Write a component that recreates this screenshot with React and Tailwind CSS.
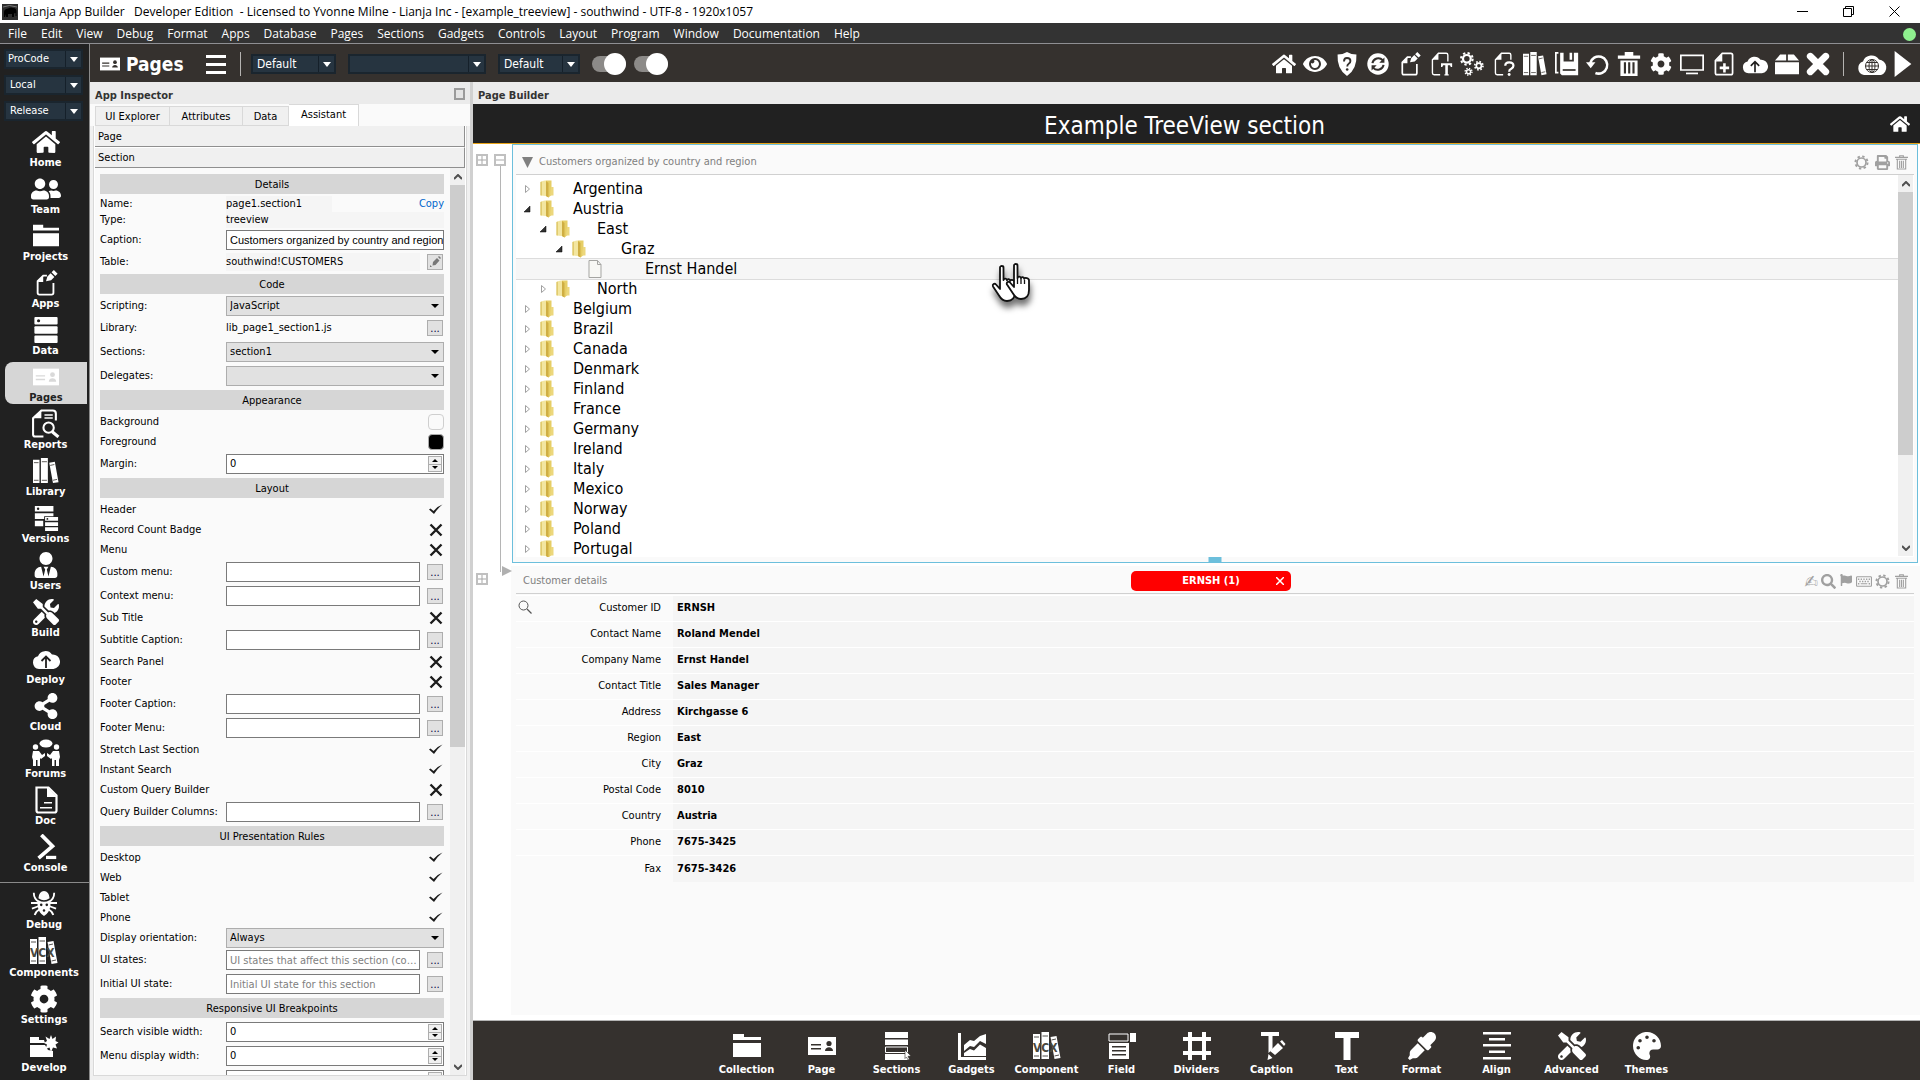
import { useState } from 'react'
import {
  FaHome, FaEye, FaCog, FaShareAlt, FaSearch, FaFlag, FaPalette,
  FaEyeDropper, FaUserTie, FaUserFriends, FaTools, FaPrint, FaRegKeyboard,
} from 'react-icons/fa'

const ui = "font-['DejaVu_Sans_Condensed','DejaVu_Sans',sans-serif]"
const segoe = "font-['Open_Sans','Noto_Sans',sans-serif]"
const narrow = "font-['Liberation_Sans','Arial',sans-serif]"

/* ---------- icons ---------- */

const Svg = ({ children, className = 'h-7 w-7', box = '0 0 28 28' }) => (
  <svg viewBox={box} className={className} fill="currentColor" aria-hidden="true">{children}</svg>
)

const FolderIcon = (p) => (
  <Svg {...p}><path d="M0 2h11v3h17v3H0zM0 11h28v14H0z" /></Svg>
)
const BoxIcon = (p) => (
  <Svg {...p}><path d="M6 3h7v7H0zM15 3h7l6 7H15zM0 12h28v14H0z" /></Svg>
)
const CardIcon = ({ hole = '#211f1e', ...p }) => (
  <Svg {...p}>
    <path d="M0 5h28v18H0z" />
    <g fill={hole}>
      <path d="M3 12h10v1.500H3zM3 16h10v1.500H3zM17 19c0-5 8-5 8 0z" />
      <circle cx="21" cy="11.500" r="2.600" />
    </g>
  </Svg>
)
const DocEditIcon = (p) => (
  <Svg {...p}>
    <path d="M15 6h-4L5 12v12.500q0 2 2 2h13q2 0 2-2V14" fill="none" stroke="currentColor" strokeWidth="2" />
    <path d="M11 6v7H5zM14 12l1.500-5L19 3.500l4 4L19.500 11zM20 2.500L22.500 0l4 4L24 6.500z" />
  </Svg>
)
const DocTextIcon = (p) => (
  <Svg {...p}>
    <path d="M13 26.500H6q-2 0-2-2V9l7-7.500h9q2 0 2 2V11" fill="none" stroke="currentColor" strokeWidth="1.600" />
    <path d="M11 2v7H4zM14 13h13v4.500h-1.500l-1-2H22V26h1v1.500h-5V26h1V15.500h-2.500l-1 2H14z" />
  </Svg>
)
const DocHelpIcon = (p) => (
  <Svg {...p}>
    <path d="M13 26.500H6q-2 0-2-2V9l7-7.500h9q2 0 2 2V9" fill="none" stroke="currentColor" strokeWidth="1.600" />
    <path d="M11 2v7H4z" />
    <path d="M15.500 16q0-4 4.500-4 5 0 5 4 0 2-2.500 3.500Q20 20.500 20 23" fill="none" stroke="currentColor" strokeWidth="2.600" />
    <circle cx="20" cy="26.300" r="1.700" />
  </Svg>
)
const DocPlusIcon = (p) => (
  <Svg {...p}>
    <path d="M12 1.500h10q2 0 2 2v21q0 2-2 2H6q-2 0-2-2V10z" fill="none" stroke="currentColor" strokeWidth="2" />
    <path d="M12 2v9H4zM13 13h3v4h4v3h-4v4h-3v-4H9v-3h4z" />
  </Svg>
)
const DocIcon = (p) => (
  <Svg {...p}>
    <path d="M4.500 1.500h12l8 8v15q0 2-2 2h-16q-2 0-2-2z" fill="none" stroke="currentColor" strokeWidth="2.200" />
    <path d="M15 1v10h10zM12 16h8v1.600h-8zM8 21h12v1.600H8z" />
  </Svg>
)
const ReportIcon = (p) => (
  <Svg {...p}>
    <path d="M12 26.500H4q-2 0-2-2V9l8-7.500h11q3 0 3 3V11" fill="none" stroke="currentColor" strokeWidth="2" />
    <path d="M10 1v8H2zM13 5h8v1.500h-8zM13 8h8v1.500h-8z" />
    <circle cx="17" cy="18" r="5" fill="none" stroke="currentColor" strokeWidth="2" />
    <path d="M20.500 22l6 5" stroke="currentColor" strokeWidth="3" />
  </Svg>
)
const ServerIcon = (p) => (
  <Svg {...p}>
    <rect x="1.500" y="0" width="25" height="8" rx="1" />
    <rect x="1.500" y="10" width="25" height="8" rx="1" />
    <rect x="1.500" y="20" width="25" height="8" rx="1" />
    <circle cx="6" cy="4" r="1.700" fill="#211f1e" />
  </Svg>
)
const VersionsIcon = (p) => (
  <Svg {...p}>
    <path d="M2 1h20v6H2zM2 9h20v3H12v3H2zM2 17h9v6H2zM13 13h14v4H13zM13 18.500h14v4H13zM13 24h14v4H13z" />
    <circle cx="5.500" cy="4" r="1.300" fill="#211f1e" />
    <circle cx="15.500" cy="15" r="1" fill="#211f1e" />
  </Svg>
)
const BooksIcon = ({ text, ...p }) => (
  <Svg {...p}>
    <path d="M0 2h7v25H0zM8.500 0h7.500v27H8.500zM17.500 5l6-1 4 22-6 1z" />
    <path d="M1 5h5M1 24h5M9.500 4h5.500M9.500 24h5.500M18.500 8l4.500-1M21.500 24l4.500-1" stroke="#55524f" strokeWidth="1" />
    {text && (
      <text x="0" y="20" fill="#4a4940" fontSize="12" fontWeight="bold" fontFamily="DejaVu Sans Condensed">{text}</text>
    )}
  </Svg>
)
const CloudUpIcon = (p) => (
  <Svg {...p}>
    <path d="M7 24a6.500 6.500 0 0 1-1-12.800A8 8 0 0 1 20 9.500 7.200 7.200 0 0 1 21.500 24z" />
    <path d="M14 23v-11M9.500 16l4.500-4.500 4.500 4.500" fill="none" stroke="#211f1e" strokeWidth="1.800" />
  </Svg>
)
const CloudGlobeIcon = (p) => (
  <Svg {...p} box="0 0 32 28">
    <path d="M8 25a7 7 0 0 1-1-13.500A9 9 0 0 1 23 9.500 8 8 0 0 1 25 25z" />
    <g fill="none" stroke="#34302d" strokeWidth="1">
      <circle cx="16" cy="16" r="6.500" />
      <ellipse cx="16" cy="16" rx="3" ry="6.500" />
      <path d="M9.500 16h13M16 9.500v13M10.500 12.500h11M10.500 19.500h11" />
    </g>
  </Svg>
)
const GearsIcon = (p) => (
  <Svg {...p}>
    <g fill="none" stroke="currentColor">
      <circle cx="8" cy="8" r="4.500" strokeWidth="2.600" />
      <circle cx="8" cy="8" r="6.800" strokeWidth="2.400" strokeDasharray="2.670 2.670" />
      <circle cx="22" cy="16" r="3" strokeWidth="2" />
      <circle cx="22" cy="16" r="4.800" strokeWidth="2" strokeDasharray="1.885 1.885" />
      <circle cx="10" cy="23" r="2.400" strokeWidth="1.800" />
      <circle cx="10" cy="23" r="4" strokeWidth="1.600" strokeDasharray="1.570 1.570" />
    </g>
  </Svg>
)
const ForumsIcon = (p) => (
  <Svg {...p}>
    <ellipse cx="14" cy="4.500" rx="6.500" ry="4" />
    <circle cx="3.500" cy="8" r="2.700" /><circle cx="24.500" cy="8" r="2.700" />
    <path d="M1 12h6l3 4 3-2v3l-4 3-1-1v8H5.500v-6H4v6H1V21l-1-3zM27 12h-6l-3 4-3-2v3l4 3 1-1v8h2.500v-6H24v6h3V21l1-3z" />
  </Svg>
)
const ConsoleIcon = (p) => (
  <Svg {...p}>
    <path d="M9 1l12 12-15 13" fill="none" stroke="currentColor" strokeWidth="4" />
    <path d="M14 23.500h11V27H14z" />
  </Svg>
)
const BugIcon = (p) => (
  <Svg {...p}>
    <path d="M8 9a6 8 0 0 1 12 0q-6 4-12 0zM8 11q6 3.500 12 0l1 5q-1 9-7 12-6-3-7-12z" />
    <path d="M3 3q0 7 6 10M25 3q0 7-6 10M0 14h8M20 14h8M1 20l7-2.500M27 20l-7-2.500M4 27q1-4 5-6M24 27q-1-4-5-6" fill="none" stroke="currentColor" strokeWidth="2" />
    <g fill="#211f1e"><circle cx="11" cy="16" r="1.400" /><circle cx="17" cy="16" r="1.400" /><circle cx="14" cy="22" r="1.300" /></g>
  </Svg>
)
const DevelopIcon = (p) => (
  <Svg {...p}>
    <path d="M0 4h9v3h5l1 3H0zM0 12h15l3 5 5 1v6H0z" />
    <path d="M21 2l1.500 4L26 3.500 25.500 8l3 1.500-3 2 1.500 4-4-1L21 19l-1.500-4.500-4 1.500 1.500-4.500-3-1.500 3-2-1.500-4.500 4 2.500z" />
  </Svg>
)
const ShieldIcon = (p) => (
  <Svg {...p}>
    <path d="M14 0q5 3 11 3 1 17-11 25Q2 20 3 3q6 0 11-3z" />
    <path d="M10.500 11q0-4 3.500-4 4 0 4 3.500 0 2-2 3.200-1.700 1-1.700 3.300" fill="none" stroke="#34302d" strokeWidth="2.200" />
    <circle cx="14.200" cy="20.500" r="1.500" fill="#34302d" />
  </Svg>
)
const SyncIcon = (p) => (
  <Svg {...p}>
    <circle cx="14" cy="14" r="12.500" />
    <g fill="none" stroke="#34302d" strokeWidth="2.400">
      <path d="M7.500 13a7 7 0 0 1 12-3.500M20.500 15a7 7 0 0 1-12 3.500" />
    </g>
    <path d="M21.500 6.500v6h-6zM6.500 21.500v-6h6z" fill="#34302d" />
  </Svg>
)
const SaveIcon = (p) => (
  <Svg {...p}>
    <path d="M4 1H1v23h3" fill="none" stroke="currentColor" strokeWidth="2" />
    <path d="M6 1h4v10h12V1h5v26H8l-2-2zM17 1h3v8h-3z" />
    <path d="M9 20h15v2H9z" fill="#34302d" />
  </Svg>
)
const UndoIcon = (p) => (
  <Svg {...p}>
    <path d="M5 13a10 10 0 1 1 6 11.500" fill="none" stroke="currentColor" strokeWidth="3" />
    <path d="M0 12h11l-5.500 7z" />
  </Svg>
)
const TrashIcon = (p) => (
  <Svg {...p}>
    <path d="M9 0h10v4h8v4H1V4h8z" />
    <path fillRule="evenodd" d="M4 10h20v18H4zM8 12v13h2.500V12zM13 12v13h2.500V12zM18 12v13h2.500V12z" />
  </Svg>
)
const TrashOutline = (p) => (
  <Svg {...p} box="0 0 14 16">
    <path d="M5 2V.700h4V2M0 2.500h14M1 4.500h12M2.500 5v10h9V5M5 6v8M7 6v8M9 6v8" fill="none" stroke="currentColor" strokeWidth="1.200" />
  </Svg>
)
const GearOutline = (p) => (
  <Svg {...p} box="0 0 16 16">
    <circle cx="8" cy="8" r="4.800" fill="none" stroke="currentColor" strokeWidth="1.800" />
    <circle cx="8" cy="8" r="6.500" fill="none" stroke="currentColor" strokeWidth="2" strokeDasharray="2.550 2.550" />
  </Svg>
)
const MonitorIcon = (p) => (
  <Svg {...p}>
    <path fillRule="evenodd" d="M0 3h28v19H0zM2 5v15h24V5z" />
    <path d="M7 24h14v2H7z" />
  </Svg>
)
const CrossIcon = (p) => (
  <Svg {...p}><path d="M5 5l18 18M23 5L5 23" stroke="currentColor" strokeWidth="8" strokeLinecap="round" /></Svg>
)
const PlayIcon = (p) => (<Svg {...p}><path d="M5 0l18 14L5 28z" /></Svg>)
const SectionsIcon = (p) => (
  <Svg {...p}>
    <path d="M2 0h23v6H2zM2 7.500h23V13H2zM2 22h23v6H2z" />
    <path d="M2.500 15h22v5.500h-22z" fill="none" stroke="currentColor" />
    <path d="M22 18l6 6-3 .3 1.500 3-1.500.7-1.500-3-1.500 1.500z" stroke="#34302d" strokeWidth="0.600" />
  </Svg>
)
const GadgetsIcon = (p) => (
  <Svg {...p}>
    <path d="M0 1h3v24h25v3H0z" />
    <path d="M6 13l6-5 4 1L22 4l6-2v10l-6-3-6 6-4-1-6 5z" />
    <path d="M6 24v-3l6-4 4 1.500 6-6 6 3.500V24z" />
  </Svg>
)
const FieldIcon = (p) => (
  <Svg {...p}>
    <path d="M1 2h19v7H1z" fill="none" stroke="currentColor" />
    <path fillRule="evenodd" d="M22 1h6v9h-6zM1 11h20v16H1zM4 14v1.500h14V14zM4 18v1.500h14V18zM4 22v1.500h14V22z" />
  </Svg>
)
const DividersIcon = (p) => (
  <Svg {...p}><path d="M5 0h4v28H5zM19 0h4v28h-4zM0 5h28v4H0zM0 19h28v4H0z" /></Svg>
)
const CaptionIcon = (p) => (
  <Svg {...p}>
    <path d="M3 0h18v4h-6.500v13l-4 4V4H3z" />
    <path d="M12 19l8-8 5 5-8 7zM22 9.500l2-1.500 3.500 4-1.500 2zM10.500 22l4 4-5 2z" />
  </Svg>
)
const TextIcon = (p) => (<Svg {...p}><path d="M2 0h24v6h-8.500v22h-7V6H2z" /></Svg>)
const AlignIcon = (p) => (
  <Svg {...p}><path d="M0 0h28v2.500H0zM6 6h16v2.500H6zM0 12h28v2.500H0zM6 18.500h16V21H6zM0 25h28v2.500H0z" /></Svg>
)
const ElephantIcon = (p) => (
  <Svg {...p} box="0 0 16 16">
    <path d="M0 0h16v16H0z" fill="#2d2d2d" />
    <path d="M2 13V8q0-3 4-3.500Q9 3 11 4q4 0 3.500 5v3h-1V9L12 9.500V13h-2v-3H6v3H4v-3l-1 3z" fill="#000" />
    <path d="M1 3q6-3 14 0" stroke="#777" fill="none" />
  </Svg>
)
const TreeFolder = () => (
  <svg viewBox="0 0 14 18" className="h-[18px] w-[14px] shrink-0" aria-hidden="true">
    <path d="M.500 2q3-2 5.500-1.500V16l-5.500-.5z" fill="#f3e6a0" />
    <path d="M6 .500h5.500V15L8.500 17.500 6 16z" fill="#e6ce66" />
    <path d="M6 1l2.500 2v14.500L6 16z" fill="#cfae42" />
    <path d="M11 7h2.500v8.500H10z" fill="#ecd77c" />
    <path d="M.500 2l1.200-.5v14L.500 15.300z" fill="#d9bf5a" />
  </svg>
)
const TreeFile = () => (
  <svg viewBox="0 0 14 18" className="h-[18px] w-[14px] shrink-0" aria-hidden="true">
    <path d="M1 .5h8.500l3.500 4v13H1z" fill="#f8f8f5" stroke="#a5a5a2" />
    <path d="M9.500.500v4H13" fill="none" stroke="#a5a5a2" />
  </svg>
)

/* two overlapping pointing hands with a soft drop shadow */
const handPath = 'M9 2.500c0-2 3.500-2 3.500 0V15c.5-2 3.300-1.700 3.500.3.500-1.800 3-1.500 3.200.5.600-1.500 4.800-1 4.800 1.700V27c0 6-3 9-8 9-4 0-6-2-8-5.500L2 21.500c-1-2 1.500-3.700 3-2L9 24z'
const HandCursor = () => (
  <svg viewBox="0 0 44 46" className="pointer-events-none absolute top-0.5 left-[475px] z-10 h-[46px] w-11 overflow-visible drop-shadow-[1px_6px_3px_rgba(0,0,0,0.55)]" aria-hidden="true">
    <g fill="#fff" stroke="#111" strokeWidth="1.800" strokeLinejoin="round">
      <path d={handPath} transform="translate(0 4)" />
      <path d={handPath} transform="translate(14 2)" />
    </g>
    <path d="M26.500 17v6M30 18v5M33.500 19v4" stroke="#111" strokeWidth="1.300" />
  </svg>
)

/* ---------- window chrome ---------- */

const menus = ['File', 'Edit', 'View', 'Debug', 'Format', 'Apps', 'Database', 'Pages', 'Sections', 'Gadgets', 'Controls', 'Layout', 'Program', 'Window', 'Documentation', 'Help']

const TitleBar = () => (
  <header className={`flex h-[23px] shrink-0 items-center bg-white text-xs text-black ${segoe}`}>
    <ElephantIcon className="ml-0.5 mr-[5px] h-4 w-4" />
    <h1 className="whitespace-pre">Lianja App Builder   Developer Edition  - Licensed to Yvonne Milne - Lianja Inc - [example_treeview] - southwind - UTF-8 - 1920x1057</h1>
    <div className="ml-auto mr-5 flex gap-[35px]">
      <button aria-label="Minimize"><Svg box="0 0 11 11" className="h-[11px] w-[11px]"><path d="M0 5h11v1H0z" /></Svg></button>
      <button aria-label="Restore"><Svg box="0 0 11 11" className="h-[11px] w-[11px]"><path d="M.500 2.500h8v8h-8zM2.500 2.500v-2h8v8h-2" fill="none" stroke="currentColor" /></Svg></button>
      <button aria-label="Close"><Svg box="0 0 11 11" className="h-[11px] w-[11px]"><path d="M.500.500l10 10M10.500.500l-10 10" stroke="currentColor" /></Svg></button>
    </div>
  </header>
)

const MenuBar = () => (
  <nav className={`flex h-[21px] shrink-0 items-center gap-[14px] border-b border-[#8f8f93] bg-[#333] pl-2 pt-0.5 text-xs text-white ${segoe}`}>
    {menus.map((m) => <button key={m}>{m}</button>)}
    <span className="ml-auto mr-1 h-[13px] w-[13px] rounded-full bg-[#8ff08f]" />
  </nav>
)

const DarkSelect = ({ label, value, className, size = 'text-xs' }) => (
  <div className={`relative h-5 border-2 border-[#1a252e] bg-[#263440] ${className}`}>
    <select aria-label={label} className={`block h-full w-full appearance-none bg-transparent pl-1 leading-4 text-white outline-none ${size}`}>
      <option>{value}</option>
    </select>
    <span className="pointer-events-none absolute right-0 top-0 flex h-full w-4 items-center justify-center border-l border-[#15202a]">
      <Svg box="0 0 8 5" className="h-[5px] w-2 text-white"><path d="M0 0h8L4 5z" /></Svg>
    </span>
  </div>
)

const Toggle = ({ label }) => {
  const [on, setOn] = useState(true)
  return (
    <label className="relative flex h-[22px] w-[34px] items-center">
      <input type="checkbox" checked={on} onChange={() => setOn(!on)} aria-label={label} className="sr-only" />
      <span className="h-4 w-full rounded-full bg-[#8c8a88]" />
      <span className={`absolute top-0 h-[22px] w-[22px] rounded-full bg-white ${on ? 'right-0' : 'left-0'}`} />
    </label>
  )
}

const t = 'h-6 w-6'
const tools = [
  ['Home', <FaHome className={t} />],
  ['Preview', <FaEye className={t} />],
  ['Security', <ShieldIcon className={t} />],
  ['Refresh', <SyncIcon className={t} />],
  ['Edit page', <DocEditIcon className={t} />],
  ['Text page', <DocTextIcon className={t} />],
  ['Processes', <GearsIcon className={t} />],
  ['Page help', <DocHelpIcon className={t} />],
  ['Library', <BooksIcon className={t} />],
  ['Save', <SaveIcon className={t} />],
  ['Undo', <UndoIcon className={t} />],
  ['Delete', <TrashIcon className={t} />],
  ['Settings', <FaCog className="h-[22px] w-[22px]" />],
  ['Desktop view', <MonitorIcon className={t} />],
  ['New page', <DocPlusIcon className={t} />],
  ['Upload', <CloudUpIcon className="h-7 w-7" />],
  ['Package', <BoxIcon className={t} />],
  ['Close page', <CrossIcon className={t} />],
]

const Toolbar = () => (
  <div className={`flex h-[38px] shrink-0 items-center bg-[#35312e] pl-[10px] pr-1 pt-0.5 text-white ${ui}`}>
    <CardIcon className="h-5 w-5" hole="#34302d" />
    <h2 className="w-[62px] pl-[6px] text-[19px] font-bold leading-none">Pages</h2>
    <button aria-label="Menu" className="ml-6 flex w-5 flex-col gap-[5px]">
      <span className="h-[3px] bg-white" /><span className="h-[3px] bg-white" /><span className="h-[3px] bg-white" />
    </button>
    <span className="ml-[14px] mr-2.5 h-6 w-px bg-[#b5b3b1]" />
    <DarkSelect label="Theme" value="Default" className="mr-3 w-[85px]" />
    <DarkSelect label="Page" value="" className="mr-3 w-[138px]" />
    <DarkSelect label="Layout" value="Default" className="mr-3 w-[82px]" />
    <div className="flex gap-2">
      <Toggle label="Design mode" />
      <Toggle label="Live mode" />
    </div>
    <div className="ml-auto flex w-[560px] items-center justify-between">
      {tools.map(([name, icon]) => (
        <button key={name} aria-label={name} className="flex w-[26px] justify-center">{icon}</button>
      ))}
    </div>
    <span className="mx-3 h-6 w-px bg-[#b5b3b1]" />
    <button aria-label="Open in browser"><CloudGlobeIcon className="h-7 w-8" /></button>
    <button aria-label="Run" className="ml-0.5"><PlayIcon className="h-[26px] w-[26px]" /></button>
  </div>
)

/* ---------- left dock ---------- */

const i = 'h-[26px] w-[26px]'
const dockTop = [
  ['Home', <FaHome className="h-7 w-7" />],
  ['Team', <FaUserFriends className="h-7 w-[30px]" />],
  ['Projects', <FolderIcon className={i} />],
  ['Apps', <DocEditIcon className={i} />],
  ['Data', <ServerIcon className={i} />],
  ['Pages', <CardIcon className={i} hole="#d9d9d9" />],
  ['Reports', <ReportIcon className="h-[29px] w-[29px]" />],
  ['Library', <BooksIcon className={i} />],
  ['Versions', <VersionsIcon className={i} />],
  ['Users', <FaUserTie className={i} />],
  ['Build', <FaTools className={i} />],
  ['Deploy', <CloudUpIcon className="h-7 w-7" />],
  ['Cloud', <FaShareAlt className={i} />],
  ['Forums', <ForumsIcon className="h-7 w-[30px]" />],
  ['Doc', <DocIcon className="h-[30px] w-7" />],
  ['Console', <ConsoleIcon className={i} />],
]
const dockBottom = [
  ['Debug', <BugIcon className={i} />],
  ['Components', <BooksIcon text="VCX" className="h-7 w-7" />],
  ['Settings', <FaCog className="h-7 w-7" />],
  ['Develop', <DevelopIcon className="h-7 w-[30px]" />],
]

const DockButton = ({ name, icon, active }) => (
  <button className={`flex flex-1 flex-col items-center justify-end text-[11px] font-bold leading-[13px] ${active ? 'ml-[5px] mr-0.5 rounded-l-lg bg-[#d6d6d6] text-[#222]' : 'pl-0.5 text-white'}`}>
    <span className="flex h-[29px] items-center text-white">{icon}</span>
    <span>{name}</span>
  </button>
)

const Dock = () => (
  <aside className={`flex w-[90px] shrink-0 flex-col border-r border-[#8a8a8a] bg-[#212121] ${ui}`}>
    <div className="flex flex-col gap-1.5 px-1 pr-[6px] pt-[5px]">
      <DarkSelect label="Mode" value="ProCode" size="text-[11px] -ml-0.5" />
      <DarkSelect label="Host" value="Local" size="text-[11px]" />
      <DarkSelect label="Build" value="Release" size="text-[11px]" />
    </div>
    <nav className="mb-2 mt-1.5 flex flex-1 flex-col gap-[5px]">
      {dockTop.map(([name, icon]) => <DockButton key={name} name={name} icon={icon} active={name === 'Pages'} />)}
    </nav>
    <nav className="flex h-[199px] flex-col border-t border-[#8a8a8a] pb-[6px] pr-[3px]">
      {dockBottom.map(([name, icon]) => <DockButton key={name} name={name} icon={icon} />)}
    </nav>
  </aside>
)

/* ---------- inspector ---------- */

const Scrollbar = ({ thumb, className = '' }) => (
  <div className={`flex w-[15px] shrink-0 flex-col bg-[#f0f0f0] text-[#505050] ${className}`}>
    <button aria-label="Scroll up" className="flex h-[17px] items-center justify-center">
      <Svg box="0 0 8 6" className="h-1.5 w-2"><path d="M0 5l4-4 4 4" fill="none" stroke="currentColor" strokeWidth="2" /></Svg>
    </button>
    <div className={`bg-[#cdcdcd] ${thumb}`} />
    <button aria-label="Scroll down" className="mt-auto flex h-[17px] items-center justify-center">
      <Svg box="0 0 8 6" className="h-1.5 w-2"><path d="M0 1l4 4 4-4" fill="none" stroke="currentColor" strokeWidth="2" /></Svg>
    </button>
  </div>
)

const toId = (s) => s.toLowerCase().replace(/[^a-z]+/g, '-')

const Heading = ({ children }) => (
  <div className="flex h-6 items-center">
    <h3 className="h-5 w-full bg-[#d6d6d6] text-center leading-[22px]">{children}</h3>
  </div>
)
const Row = ({ label, h = 'h-6', children, field }) => (
  <div className={`flex items-center ${h}`}>
    {field ? <label htmlFor={toId(label)} className="w-[126px] shrink-0 pt-px">{label}</label> : <span className="w-[126px] shrink-0 pt-px">{label}</span>}
    {children}
  </div>
)
const box = 'h-5 min-w-0 flex-1 border border-[#7a7a7a] bg-white pl-[3px] leading-[18px] outline-none placeholder:text-[#808080]'
const More = ({ label }) => (
  <button type="button" aria-label={`Choose ${label}`} className="ml-[7px] mr-px flex h-4 w-4 items-center justify-center border border-[#adadad] bg-[#e1e1e1] leading-none text-[#000040]">...</button>
)
const TextRow = ({ label, placeholder }) => (
  <Row label={label} field>
    <input id={toId(label)} type="text" placeholder={placeholder} className={`text-ellipsis ${box}`} />
    <More label={label} />
  </Row>
)
const SelectRow = ({ label, value, h }) => (
  <Row label={label} field h={h}>
    <div className="relative flex-1">
      <select id={toId(label)} className="block h-5 w-full appearance-none border border-[#adadad] bg-[#e1e1e1] px-[3px] leading-[18px] outline-none">
        <option>{value}</option>
      </select>
      <Svg box="0 0 8 4" className="pointer-events-none absolute right-[5px] top-2 h-1 w-2"><path d="M0 0h8L4 4z" /></Svg>
    </div>
  </Row>
)
const SpinRow = ({ label }) => {
  const [n, setN] = useState(0)
  return (
    <Row label={label} field>
      <div className="flex h-5 flex-1 border border-[#7a7a7a] bg-white">
        <input id={toId(label)} type="text" value={n} onChange={(e) => setN(Number(e.target.value) || 0)} className="min-w-0 flex-1 px-[3px] outline-none" />
        <div className="m-px flex w-[14px] flex-col border border-[#adadad] bg-[#f0f0f0]">
          <button type="button" aria-label={`Increase ${label}`} onClick={() => setN(n + 1)} className="flex flex-1 items-center justify-center border-b border-[#adadad]"><Svg box="0 0 6 3" className="h-[3px] w-1.5"><path d="M0 3h6L3 0z" /></Svg></button>
          <button type="button" aria-label={`Decrease ${label}`} onClick={() => setN(n - 1)} className="flex flex-1 items-center justify-center"><Svg box="0 0 6 3" className="h-[3px] w-1.5"><path d="M0 0h6L3 3z" /></Svg></button>
        </div>
      </div>
    </Row>
  )
}
const CheckRow = ({ label, checked = false }) => {
  const [on, setOn] = useState(checked)
  return (
    <label className="flex h-5 items-center justify-between">
      {label}
      <input type="checkbox" checked={on} onChange={() => setOn(!on)} className="sr-only" />
      <Svg box="0 0 14 14" className="mr-px h-[14px] w-[14px] text-[#1c1c1c]">
        {on
          ? <path d="M0 6.500l1.500-1L4.500 8Q9 3 13.500 1.500 9 5 5 11z" />
          : <path d="M1.500 1.500l11 11M12.500 1.500l-11 11" stroke="currentColor" strokeWidth="2.400" />}
      </Svg>
    </label>
  )
}

const Inspector = () => (
  <section className={`flex w-[383px] shrink-0 flex-col border-r-[3px] border-[#d0d0d0] bg-[#f0f0f0] text-[11px] text-black ${ui}`}>
    <div className="flex h-[22px] shrink-0 items-center justify-between bg-[#ebebeb] pl-[5px] pr-[5px] pt-1.5">
      <h2 className="font-bold text-[#333]">App Inspector</h2>
      <button aria-label="Float panel" className="mb-1 h-3 w-[11px] border-2 border-[#9b9b9b] bg-[#e4e4e4]" />
    </div>
    <div role="tablist" className="flex h-[22px] shrink-0 items-end bg-[#fafafa] pl-[5px]">
      {[['UI Explorer', 'w-[75px]'], ['Attributes', 'w-[73px]'], ['Data', 'w-[46px]']].map(([name, w]) => (
        <button role="tab" key={name} className={`h-5 border border-l-0 border-[#d9d9d9] bg-[#f0f0f0] pt-0.5 first:border-l ${w}`}>{name}</button>
      ))}
      <button role="tab" aria-selected="true" className="h-[22px] w-[70px] border border-b-0 border-l-0 border-[#d9d9d9] bg-white">Assistant</button>
    </div>
    <div className="mb-1 ml-[3px] mr-[3px] flex min-h-0 flex-1 flex-col border-x border-b border-[#d9d9d9] bg-white pl-px pr-px">
      <button className="h-[21px] shrink-0 border-b border-r border-[#8f8f8f] bg-[#f0f0f0] pl-[3px] pt-0.5 text-left">Page</button>
      <button className="h-[21px] shrink-0 border-b border-r border-t border-[#8f8f8f] border-t-white bg-[#f0f0f0] pl-[3px] pt-0.5 text-left">Section</button>
      <div className="flex min-h-0 flex-1">
        <form className="min-w-0 flex-1 overflow-hidden bg-[#fafafa] pl-[5px] pr-1.5 pt-1">
          <Heading>Details</Heading>
          <Row label="Name:" h="h-4">
            <span className="w-[106px] bg-[#f5f5f5]">page1.section1</span>
            <a href="#copy" className="ml-auto text-[#0066cc]">Copy</a>
          </Row>
          <Row label="Type:" h="h-4"><span className="flex-1 bg-[#f5f5f5]">treeview</span></Row>
          <Row label="Caption:" field>
            <input id="caption-" type="text" defaultValue="Customers organized by country and region" className={`${box} ${narrow}`} />
          </Row>
          <Row label="Table:" h="h-5">
            <span className="flex-1 bg-[#f5f5f5] pt-px">southwind!CUSTOMERS</span>
            <button type="button" aria-label="Edit table" className="ml-[7px] mr-px flex h-4 w-4 items-center justify-center border border-[#adadad] bg-[#e1e1e1] text-[#777]">
              <Svg box="0 0 12 12" className="h-3 w-3"><path d="M4 6l4-4 2.500 2.500L6.500 9l-3 .5zM9 1l1-1 2 2-1 1zM1 9l2 2H1z" /></Svg>
            </button>
          </Row>
          <Heading>Code</Heading>
          <SelectRow label="Scripting:" value="JavaScript" h="h-5" />
          <Row label="Library:"><span className="flex-1 pt-px">lib_page1_section1.js</span><More label="Library" /></Row>
          <SelectRow label="Sections:" value="section1" />
          <SelectRow label="Delegates:" value="" />
          <Heading>Appearance</Heading>
          <Row label="Background" h="h-5"><button type="button" aria-label="Background color" className="ml-auto h-4 w-4 rounded border border-[#cfcfcf] bg-[#fafafa]" /></Row>
          <Row label="Foreground" h="h-5"><button type="button" aria-label="Foreground color" className="ml-auto h-4 w-4 rounded-sm border border-[#aaa] bg-black" /></Row>
          <SpinRow label="Margin:" />
          <Heading>Layout</Heading>
          <CheckRow label="Header" checked />
          <CheckRow label="Record Count Badge" />
          <CheckRow label="Menu" />
          <TextRow label="Custom menu:" />
          <TextRow label="Context menu:" />
          <CheckRow label="Sub Title" />
          <TextRow label="Subtitle Caption:" />
          <CheckRow label="Search Panel" />
          <CheckRow label="Footer" />
          <TextRow label="Footer Caption:" />
          <TextRow label="Footer Menu:" />
          <CheckRow label="Stretch Last Section" checked />
          <CheckRow label="Instant Search" checked />
          <CheckRow label="Custom Query Builder" />
          <TextRow label="Query Builder Columns:" />
          <Heading>UI Presentation Rules</Heading>
          <CheckRow label="Desktop" checked />
          <CheckRow label="Web" checked />
          <CheckRow label="Tablet" checked />
          <CheckRow label="Phone" checked />
          <SelectRow label="Display orientation:" value="Always" h="h-5" />
          <TextRow label="UI states:" placeholder="UI states that affect this section (comma separated)" />
          <TextRow label="Initial UI state:" placeholder="Initial UI state for this section" />
          <Heading>Responsive UI Breakpoints</Heading>
          <SpinRow label="Search visible width:" />
          <SpinRow label="Menu display width:" />
          <SpinRow label="Menu visible width:" />
        </form>
        <Scrollbar thumb="h-[562px]" />
      </div>
    </div>
  </section>
)

/* ---------- page builder ---------- */

const tree = [
  ['Argentina', 0, 'closed'], ['Austria', 0, 'open'], ['East', 1, 'open'], ['Graz', 2, 'open'],
  ['Ernst Handel', 3, 'leaf'], ['North', 1, 'closed'], ['Belgium', 0, 'closed'], ['Brazil', 0, 'closed'],
  ['Canada', 0, 'closed'], ['Denmark', 0, 'closed'], ['Finland', 0, 'closed'], ['France', 0, 'closed'],
  ['Germany', 0, 'closed'], ['Ireland', 0, 'closed'], ['Italy', 0, 'closed'], ['Mexico', 0, 'closed'],
  ['Norway', 0, 'closed'], ['Poland', 0, 'closed'], ['Portugal', 0, 'closed'],
]
const indent = ['pl-2', 'pl-6', 'pl-10', 'pl-14']
const textGap = ['pl-[19px]', 'pl-[27px]', 'pl-[35px]', 'pl-[43px]']

const TreeRow = ({ name, level, state }) => (
  <li className={`relative flex h-5 items-center ${indent[level]} ${state === 'leaf' ? 'bg-[#f6f6f6] outline outline-[#dcdcdc]' : ''}`}>
    <Svg box="0 0 8 8" className="mr-2 h-2 w-2 shrink-0">
      {state === 'closed' && <path d="M1.500.500v7L5.500 4z" fill="none" stroke="#a0a0a0" />}
      {state === 'open' && <path d="M6 1v6H0z" fill="#333" stroke="#000" strokeWidth="0.500" />}
    </Svg>
    {state === 'leaf' ? <TreeFile /> : <TreeFolder />}
    <span className={textGap[level]}>{name}</span>
    {state === 'leaf' && <HandCursor />}
  </li>
)

const Expander = ({ label, minus }) => (
  <button aria-label={label} className="flex h-3 w-3 items-center justify-center border-2 border-[#c0c0c0] text-[#a8a8a8]">
    <Svg box="0 0 8 8" className="h-2 w-2"><path d={minus ? 'M0 3.500h8v1H0z' : 'M0 3.500h8v1H0zM3.500 0h1v8h-1z'} /></Svg>
  </button>
)

const details = [
  ['Customer ID', 'ERNSH'], ['Contact Name', 'Roland Mendel'], ['Company Name', 'Ernst Handel'],
  ['Contact Title', 'Sales Manager'], ['Address', 'Kirchgasse 6'], ['Region', 'East'], ['City', 'Graz'],
  ['Postal Code', '8010'], ['Country', 'Austria'], ['Phone', '7675-3425'], ['Fax', '7675-3426'],
]

const palette = [
  ['Collection', <FolderIcon />], ['Page', <CardIcon hole="#34302d" />], ['Sections', <SectionsIcon />],
  ['Gadgets', <GadgetsIcon />], ['Component', <BooksIcon text="VCX" />], ['Field', <FieldIcon />],
  ['Dividers', <DividersIcon />], ['Caption', <CaptionIcon />], ['Text', <TextIcon />],
  ['Format', <FaEyeDropper className="h-7 w-7" />], ['Align', <AlignIcon />],
  ['Advanced', <FaTools className="h-7 w-7" />], ['Themes', <FaPalette className="h-7 w-7" />],
]

const TreeSection = () => (
  <div className="flex h-[419px] shrink-0">
    <div className="relative flex w-[39px] shrink-0 gap-1.5 pl-[3px] pt-[10px]">
      <Expander label="Expand all" />
      <Expander label="Collapse all" minus />
      <span className="absolute left-[27px] top-[22px] h-[406px] w-px bg-[#b5b5b5]" />
      <Svg box="0 0 10 10" className="absolute left-[29px] top-[422px] h-2.5 w-2.5 text-[#b0b0b0]"><path d="M0 0l10 5-10 5z" /></Svg>
    </div>
    <section className="relative mr-0.5 flex min-w-0 flex-1 flex-col border border-[#6cbfdc] bg-[#fafafa] px-[3px] pb-[5px]">
      <header className="flex h-[30px] shrink-0 items-center border-b border-[#d0d0d0] pl-1.5 pr-1.5 pt-1.5 text-[11px] text-[#808080]">
        <Svg box="0 0 11 11" className="h-[11px] w-[11px]"><path d="M0 0h11L5.500 11z" /></Svg>
        <h3 className="ml-1.5">Customers organized by country and region</h3>
        <div className="ml-auto flex items-center gap-[5px] text-[#a0a0a0]">
          <button aria-label="Section settings"><GearOutline className="mr-px h-[15px] w-[15px]" /></button>
          <button aria-label="Print section"><FaPrint className="h-[15px] w-[15px]" /></button>
          <button aria-label="Delete section"><TrashOutline className="h-[15px] w-[13px]" /></button>
        </div>
      </header>
      <div className="flex min-h-0 flex-1 bg-white">
        <ul className="min-w-0 flex-1 overflow-hidden pt-1 text-base leading-5 text-black">
          {tree.map(([name, level, state]) => <TreeRow key={name} name={name} level={level} state={state} />)}
        </ul>
        <Scrollbar thumb="h-[263px]" className="mb-px mr-px" />
      </div>
      <span className="absolute bottom-0 left-1/2 h-[5px] w-[13px] -translate-x-1/2 bg-[#6cbfdc]" />
    </section>
  </div>
)

const DetailSection = () => (
  <div className="flex min-h-0 flex-1">
    <div className="w-[38px] shrink-0 pl-[3px] pt-[7px]"><Expander label="Expand details" /></div>
    <section className="mb-[5px] min-w-0 flex-1 bg-[#fafafa] pl-[5px] pr-1.5 text-[11px]">
      <header className="relative flex h-7 items-center justify-between border-b border-[#d0d0d0] pl-[7px] pr-1.5 pt-1 text-[#808080]">
        <h3>Customer details</h3>
        <div className="absolute bottom-0.5 left-1/2 -ml-1 flex h-5 w-40 -translate-x-1/2 items-center rounded-[5px] bg-[#ff0000] font-bold text-white">
          <span className="flex-1 text-center">ERNSH (1)</span>
          <button aria-label="Remove filter" className="absolute right-[7px]"><Svg box="0 0 8 8" className="h-2 w-2"><path d="M0 0l8 8M8 0L0 8" stroke="currentColor" strokeWidth="1.500" /></Svg></button>
        </div>
        <div className="flex items-center gap-[3px] text-[#a0a0a0]">
          <button aria-label="Sign" className="text-lg leading-none">✍</button>
          <button aria-label="Search"><FaSearch className="h-[15px] w-[15px]" /></button>
          <button aria-label="Flag"><FaFlag className="mb-1 h-3 w-[14px]" /></button>
          <button aria-label="Keyboard"><FaRegKeyboard className="h-[15px] w-4" /></button>
          <button aria-label="Detail settings"><GearOutline className="h-[15px] w-[15px]" /></button>
          <button aria-label="Delete details"><TrashOutline className="ml-0.5 h-[15px] w-[13px]" /></button>
        </div>
      </header>
      <table className="mt-px w-full border-collapse text-black">
        <tbody>
          {details.map(([label, value], n) => (
            <tr key={label} className="h-[26px] border-t border-white">
              <th scope="row" className="relative w-[157px] pr-3 text-right font-normal">
                {n === 0 && (
                  <Svg box="0 0 14 14" className="absolute left-0.5 top-1 h-[14px] w-[14px] text-[#555]">
                    <circle cx="5.500" cy="5.500" r="4.500" fill="none" stroke="currentColor" /><path d="M9 9l4.500 4.500" stroke="currentColor" strokeWidth="1.300" />
                  </Svg>
                )}
                {label}
              </th>
              <td className="bg-[#f5f5f5] pl-1 font-bold">{value}</td>
            </tr>
          ))}
        </tbody>
      </table>
    </section>
  </div>
)

const PageBuilder = () => (
  <main className={`flex min-w-0 flex-1 flex-col bg-white ${ui}`}>
    <div className="flex h-[22px] shrink-0 items-center bg-[#ebebeb] pl-[5px] pt-1.5">
      <h2 className="text-[11px] font-bold text-[#333]">Page Builder</h2>
    </div>
    <div className="relative flex h-10 shrink-0 items-center justify-center border-b border-[#e8a317] bg-[#212121] pr-6 text-white">
      <h2 className="pt-1 text-2xl leading-none">Example TreeView section</h2>
      <button aria-label="Page home" className="absolute right-[10px]"><FaHome className="h-5 w-5" /></button>
    </div>
    <TreeSection />
    <div className="h-[3px] shrink-0" />
    <DetailSection />
    <nav className="flex h-[60px] shrink-0 justify-center border-t border-[#b5b5b5] bg-[#35312e] pt-[11px] text-[11px] font-bold text-white">
      {palette.map(([name, icon]) => (
        <button key={name} className="flex w-[75px] flex-col items-center leading-[19px]">{icon}{name}</button>
      ))}
    </nav>
  </main>
)

export default function App() {
  return (
    <div className="flex h-screen flex-col overflow-hidden">
      <TitleBar />
      <MenuBar />
      <div className="flex min-h-0 flex-1">
        <Dock />
        <div className="flex min-w-0 flex-1 flex-col">
          <Toolbar />
          <div className="flex min-h-0 flex-1">
            <Inspector />
            <PageBuilder />
          </div>
        </div>
      </div>
    </div>
  )
}
